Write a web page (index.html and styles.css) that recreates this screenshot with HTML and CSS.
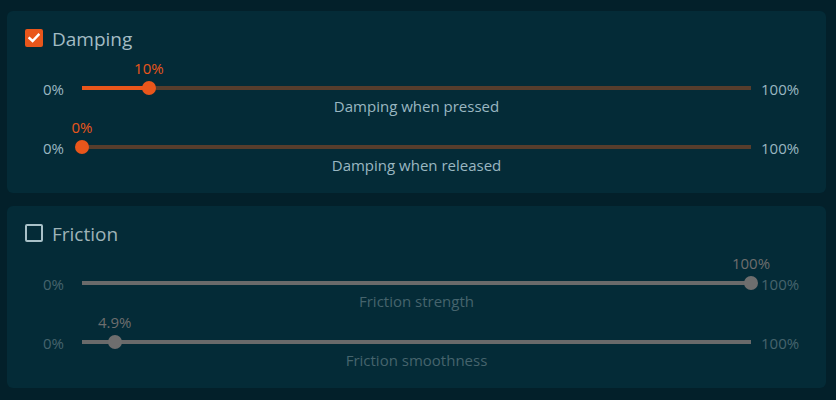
FILE: index.html
```html
<!DOCTYPE html>
<html>
<head>
<meta charset="utf-8">
<link rel="stylesheet" href="styles.css">
</head>
<body>
<div class="page">
  <section class="panel">
    <div class="header">
      <span class="check checked">
        <svg width="12" height="10" viewBox="0 0 12 10"><path d="M1.5 5.2 L4.6 8 L10.5 1.8" fill="none" stroke="#fff" stroke-width="2.4" stroke-linecap="square"/></svg>
      </span>
      <span class="title">Damping</span>
    </div>
    <div class="slider">
      <div class="value-line"><span class="value" style="left:10%">10%</span></div>
      <div class="track-line">
        <span class="min">0%</span>
        <div class="track"><div class="fill" style="width:10%"></div><span class="thumb" style="left:10%"></span></div>
        <span class="max">100%</span>
      </div>
      <div class="caption">Damping when pressed</div>
    </div>
    <div class="slider">
      <div class="value-line"><span class="value" style="left:0%">0%</span></div>
      <div class="track-line">
        <span class="min">0%</span>
        <div class="track"><div class="fill" style="width:0%"></div><span class="thumb" style="left:0%"></span></div>
        <span class="max">100%</span>
      </div>
      <div class="caption">Damping when released</div>
    </div>
  </section>
  <section class="panel disabled">
    <div class="header">
      <span class="check"></span>
      <span class="title">Friction</span>
    </div>
    <div class="slider">
      <div class="value-line"><span class="value" style="left:100%">100%</span></div>
      <div class="track-line">
        <span class="min">0%</span>
        <div class="track"><span class="thumb" style="left:100%"></span></div>
        <span class="max">100%</span>
      </div>
      <div class="caption">Friction strength</div>
    </div>
    <div class="slider">
      <div class="value-line"><span class="value" style="left:4.9%">4.9%</span></div>
      <div class="track-line">
        <span class="min">0%</span>
        <div class="track"><span class="thumb" style="left:4.9%"></span></div>
        <span class="max">100%</span>
      </div>
      <div class="caption">Friction smoothness</div>
    </div>
  </section>
</div>
</body>
</html>
```

FILE: styles.css
```css
html, body {
  margin: 0;
  padding: 0;
  background: #03202a;
}
body {
  font-family: "Open Sans", "DejaVu Sans", sans-serif;
  color: #9ab7c1;
}
.page {
  padding: 11px 10px 0 7px;
  display: flex;
  flex-direction: column;
  gap: 13px;
}
.panel {
  background: #042b37;
  border-radius: 6px;
  height: 182px;
  box-sizing: border-box;
  padding: 18px 0 0 17px;
  display: flex;
  flex-direction: column;
}
.header {
  display: flex;
  align-items: center;
  height: 18px;
  gap: 9px;
  margin: 0 0 11px 1px;
}
.check {
  width: 18px;
  height: 18px;
  box-sizing: border-box;
  border: 2px solid #a9c1c8;
  border-radius: 2px;
  display: flex;
  align-items: center;
  justify-content: center;
}
.check.checked {
  background: #e9561b;
  border-color: #e9561b;
}
.title {
  font-size: 19px;
  color: #a3bcc4;
  line-height: 18px;
  padding-top: 2px;
}
.slider {
  display: flex;
  flex-direction: column;
  margin-bottom: 4px;
}
.value-line {
  position: relative;
  height: 20px;
  margin-left: 58px;
  width: 669px;
}
.value {
  position: absolute;
  top: 0;
  transform: translateX(-50%);
  font-size: 15px;
  line-height: 20px;
  color: #e9561b;
}
.track-line {
  display: grid;
  grid-template-columns: 40px 669px auto;
  grid-template-rows: 20px;
  column-gap: 18px;
  align-items: center;
  height: 20px;
}
.track-line .max {
  margin-left: -8px;
}
.min, .max {
  font-size: 15px;
  line-height: 18px;
  padding-top: 2px;
  color: #9ab7c1;
}
.min {
  text-align: right;
}
.track {
  position: relative;
  height: 4px;
  background: #573d2c;
}
.fill {
  height: 100%;
  background: #e9561b;
}
.thumb {
  position: absolute;
  top: 50%;
  width: 14px;
  height: 14px;
  margin: -7px 0 0 -7px;
  border-radius: 50%;
  background: #e9561b;
}
.caption {
  margin-left: 58px;
  width: 669px;
  text-align: center;
  font-size: 15px;
  line-height: 14px;
  height: 14px;
  padding-top: 1px;
  color: #9ab7c1;
}
.disabled .title {
  color: #9fb3b8;
}
.disabled .check {
  border-color: #a9c1c8;
}
.disabled .value {
  color: #6e6e6e;
}
.disabled .min, .disabled .max, .disabled .caption {
  color: #46646d;
}
.disabled .track {
  background: #6a6a6a;
}
.disabled .thumb {
  background: #6e6e6e;
}
```
